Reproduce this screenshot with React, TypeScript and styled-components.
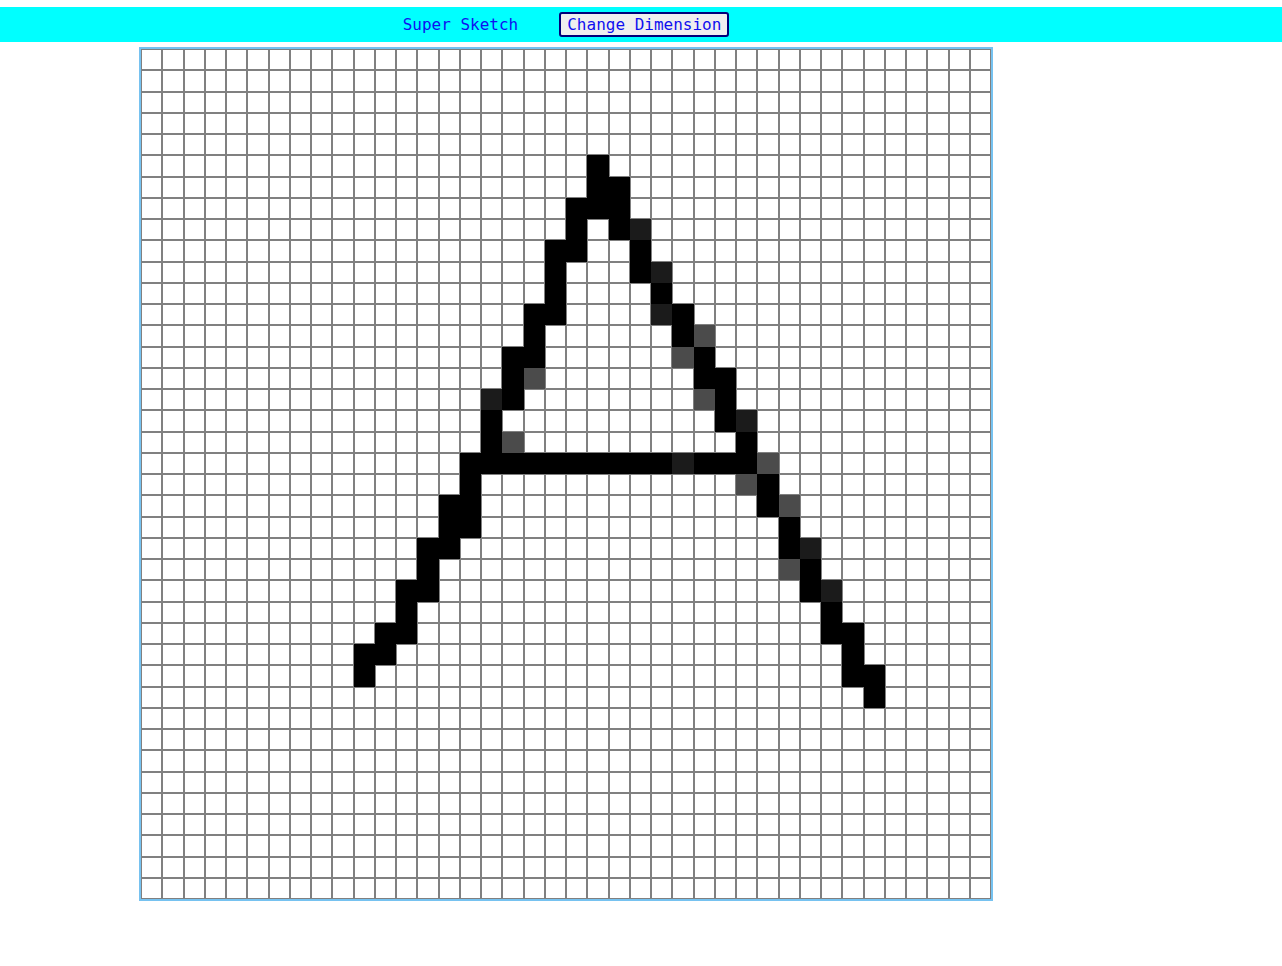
import React from "react";
import styled, { createGlobalStyle } from "styled-components";

const GlobalStyle = createGlobalStyle`
  html, body { margin: 0; padding: 0; background: #ffffff; }
  body { font-family: "DejaVu Sans Mono", monospace; }
`;

const Page = styled.div`
  padding-top: 7px;
`;

const Header = styled.header`
  background: #00ffff;
  height: 35px;
  display: flex;
  align-items: center;
`;

const HeaderInner = styled.div`
  width: 1132px;
  display: flex;
  justify-content: center;
  align-items: center;
  gap: 41px;
`;

const Title = styled.span`
  font-family: "DejaVu Sans Mono", monospace;
  font-size: 16px;
  color: #1010f0;
`;

const DimButton = styled.button`
  font-family: "DejaVu Sans Mono", monospace;
  font-size: 16px;
  line-height: 19px;
  color: #1010f0;
  background: #efefef;
  border: 2px solid #00007a;
  border-radius: 3px;
  padding: 1px 6px;
  cursor: pointer;
`;

const Stage = styled.main`
  width: 1132px;
  display: flex;
  justify-content: center;
  padding-top: 5px;
`;

const Board = styled.div`
  width: 850px;
  height: 850px;
  border: 2px solid #76c2f0;
  display: grid;
  grid-template-columns: repeat(40, 1fr);
  grid-template-rows: repeat(40, 1fr);
`;

const Cell = styled.div<{ $fill?: string }>`
  box-sizing: border-box;
  border: 1px solid ${(p) => p.$fill ?? "#808080"};
  background: ${(p) => p.$fill ?? "#ffffff"};
`;

const B = "#000000";
const D = "#1b1b1b";
const G = "#4b4b4b";

// [row, col, color]
const pixels: [number, number, string][] = [
  [5, 21, B],
  [6, 21, B], [6, 22, B],
  [7, 20, B], [7, 21, B], [7, 22, B],
  [8, 20, B], [8, 22, B], [8, 23, D],
  [9, 19, B], [9, 20, B], [9, 23, B],
  [10, 19, B], [10, 23, B], [10, 24, D],
  [11, 19, B], [11, 24, B],
  [12, 18, B], [12, 19, B], [12, 24, D], [12, 25, B],
  [13, 18, B], [13, 25, B], [13, 26, G],
  [14, 17, B], [14, 18, B], [14, 25, G], [14, 26, B],
  [15, 17, B], [15, 18, G], [15, 26, B], [15, 27, B],
  [16, 16, D], [16, 17, B], [16, 26, G], [16, 27, B],
  [17, 16, B], [17, 27, B], [17, 28, D],
  [18, 16, B], [18, 17, G], [18, 28, B],
  [19, 15, B], [19, 16, B], [19, 17, B], [19, 18, B], [19, 19, B], [19, 20, B],
  [19, 21, B], [19, 22, B], [19, 23, B], [19, 24, B], [19, 25, D], [19, 26, B],
  [19, 27, B], [19, 28, B], [19, 29, G],
  [20, 15, B], [20, 28, G], [20, 29, B],
  [21, 14, B], [21, 15, B], [21, 29, B], [21, 30, G],
  [22, 14, B], [22, 15, B], [22, 30, B],
  [23, 13, B], [23, 14, B], [23, 30, B], [23, 31, D],
  [24, 13, B], [24, 30, G], [24, 31, B],
  [25, 12, B], [25, 13, B], [25, 31, B], [25, 32, D],
  [26, 12, B], [26, 32, B],
  [27, 11, B], [27, 12, B], [27, 32, B], [27, 33, B],
  [28, 10, B], [28, 11, B], [28, 33, B],
  [29, 10, B], [29, 33, B], [29, 34, B],
  [30, 34, B],
];

const SIZE = 40;
const fillMap = new Map<string, string>();
pixels.forEach(([r, c, color]) => fillMap.set(`${r},${c}`, color));

export default function App() {
  const cells: React.ReactNode[] = [];
  for (let r = 0; r < SIZE; r++) {
    for (let c = 0; c < SIZE; c++) {
      cells.push(<Cell key={`${r}-${c}`} $fill={fillMap.get(`${r},${c}`)} />);
    }
  }
  return (
    <>
      <GlobalStyle />
      <Page>
        <Header>
          <HeaderInner>
            <Title>Super Sketch</Title>
            <DimButton>Change Dimension</DimButton>
          </HeaderInner>
        </Header>
        <Stage>
          <Board>{cells}</Board>
        </Stage>
      </Page>
    </>
  );
}
